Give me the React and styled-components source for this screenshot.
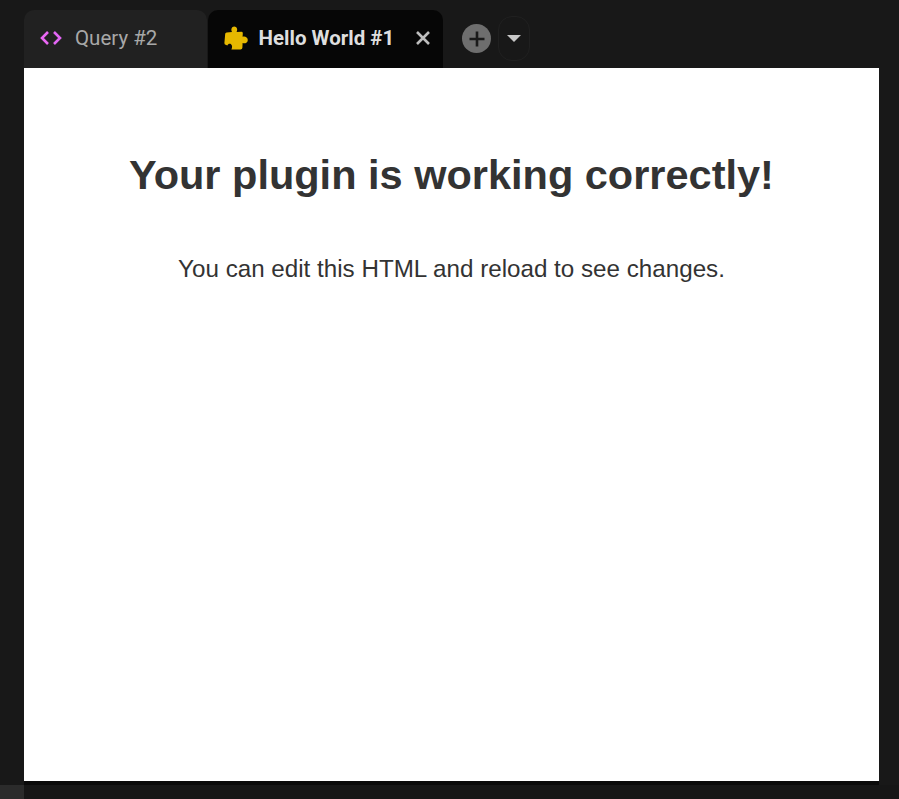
import styled, { createGlobalStyle } from 'styled-components';

const Global = createGlobalStyle`
  html, body {
    margin: 0;
    padding: 0;
    background: #181818;
    overflow: hidden;
  }
`;

const Page = styled.div`
  width: 899px;
  height: 799px;
  display: grid;
  grid-template-columns: 24px 855px 20px;
  grid-template-rows: 68px 713px 4px 14px;
  background: #181818;
`;

const TabBar = styled.div`
  grid-column: 2 / 4;
  grid-row: 1;
  display: flex;
  align-items: flex-end;
  gap: 1px;
  font-family: Roboto, sans-serif;
`;

const Tab = styled.div`
  height: 58px;
  width: ${(p) => p.$width}px;
  box-sizing: border-box;
  display: flex;
  align-items: center;
  padding: 0 0 2px ${(p) => (p.$active ? 16 : 15)}px;
  border-radius: 10px 10px 0 0;
  background: ${(p) => (p.$active ? '#060606' : '#212121')};
  color: ${(p) => (p.$active ? '#dedede' : '#a8a8a8')};
  font-size: 20.5px;
  font-weight: ${(p) => (p.$active ? 700 : 400)};
  white-space: nowrap;
`;

const TabIcon = styled.span`
  display: flex;
  width: ${(p) => p.$width}px;
  flex: none;
`;

const Close = styled.span`
  display: flex;
  margin-left: 22px;
`;

const AddButton = styled.div`
  width: 29px;
  height: 29px;
  margin: 0 0 15px 18px;
  border-radius: 50%;
  background: #6e6e6e;
  display: flex;
  align-items: center;
  justify-content: center;
`;

const MenuButton = styled.div`
  width: 32px;
  height: 45px;
  margin: 0 0 7px 6px;
  box-sizing: border-box;
  border: 1px solid #202020;
  border-radius: 14px;
  display: flex;
  align-items: center;
  justify-content: center;
`;

const Caret = styled.span`
  width: 0;
  height: 0;
  border-left: 7px solid transparent;
  border-right: 7px solid transparent;
  border-top: 7px solid #c8c8c8;
`;

const Content = styled.main`
  grid-column: 2;
  grid-row: 1 / 3;
  margin-top: 68px;
  background: #fff;
  color: #333;
  font-family: 'Liberation Sans', Arial, sans-serif;
  text-align: center;
  overflow: hidden;
`;

const Heading = styled.h1`
  margin: 82px 0 0;
  font-size: 41.5px;
  line-height: 50px;
  font-weight: 700;
`;

const Text = styled.p`
  margin: 54px 0 0;
  font-size: 24.2px;
  line-height: 30px;
`;

const BottomEdge = styled.div`
  grid-column: 2;
  grid-row: 3;
  background: #0a0a0a;
`;

const Corner = styled.div`
  grid-column: 1;
  grid-row: 4;
  background: #2b2b2b;
`;

const BottomBar = styled.div`
  grid-column: 2 / 4;
  grid-row: 4;
  background: #161616;
`;

export default function App() {
  return (
    <Page>
      <Global />
      <TabBar>
        <Tab $width={183}>
          <TabIcon $width={36}>
            <svg width="24" height="16" viewBox="0 0 24 16" fill="none" strokeWidth="2.6">
              <path d="M9 2 3 8 9 14" stroke="#ea68f4" />
              <path d="M15 2 21 8 15 14" stroke="#e266f4" />
            </svg>
          </TabIcon>
          Query #2
        </Tab>
        <Tab $width={235} $active>
          <TabIcon $width={34.5}>
            <svg width="24" height="24" viewBox="0 0 24 24" fill="#e6b800">
              <path d="M2.6 6.4 8 6C6.6 3.2 7.8.4 10.2.4 12.8.4 14 3.2 12.6 6L17.4 5.8Q18.8 5.8 18.8 7.2L18.6 10.8C20.8 10 23.8 11.2 23.8 14 23.8 16.8 20.8 18 18.6 17L18.4 21.8Q18.2 23.4 16.6 23.4L7.4 23.4C8.4 21.6 8.4 19.4 7 18.2 5.8 17.2 4 17.8 3.4 19.4L1.6 18.8Q.4 18.4.4 17L1.2 7.8Q1.4 6.5 2.6 6.4Z" />
            </svg>
          </TabIcon>
          Hello World #1
          <Close>
            <svg width="14" height="14" viewBox="0 0 14 14" fill="none" stroke="#bdbdbd" strokeWidth="2.6">
              <path d="M1 1 13 13M13 1 1 13" />
            </svg>
          </Close>
        </Tab>
        <AddButton>
          <svg width="18" height="18" viewBox="0 0 18 18" fill="none" stroke="#1a1a1a" strokeWidth="2.6">
            <path d="M9 1.5V16.5M1.5 9H16.5" />
          </svg>
        </AddButton>
        <MenuButton>
          <Caret />
        </MenuButton>
      </TabBar>
      <Content>
        <Heading>Your plugin is working correctly!</Heading>
        <Text>You can edit this HTML and reload to see changes.</Text>
      </Content>
      <BottomEdge />
      <Corner />
      <BottomBar />
    </Page>
  );
}
